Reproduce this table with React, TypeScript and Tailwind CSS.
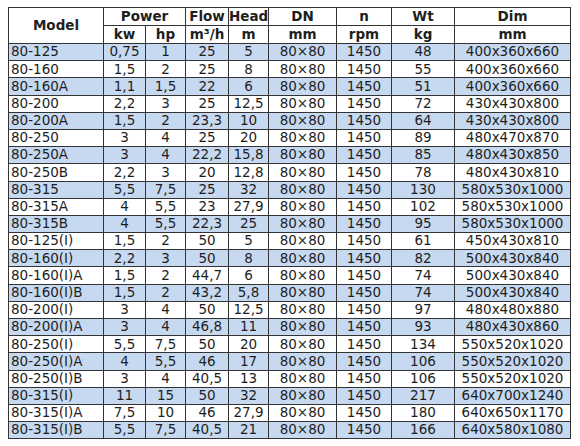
import React from "react";

const rows: string[][] = [
  ["80-125", "0,75", "1", "25", "5", "48", "400x360x660"],
  ["80-160", "1,5", "2", "25", "8", "55", "400x360x660"],
  ["80-160A", "1,1", "1,5", "22", "6", "51", "400x360x660"],
  ["80-200", "2,2", "3", "25", "12,5", "72", "430x430x800"],
  ["80-200A", "1,5", "2", "23,3", "10", "64", "430x430x800"],
  ["80-250", "3", "4", "25", "20", "89", "480x470x870"],
  ["80-250A", "3", "4", "22,2", "15,8", "85", "480x430x850"],
  ["80-250B", "2,2", "3", "20", "12,8", "78", "480x430x810"],
  ["80-315", "5,5", "7,5", "25", "32", "130", "580x530x1000"],
  ["80-315A", "4", "5,5", "23", "27,9", "102", "580x530x1000"],
  ["80-315B", "4", "5,5", "22,3", "25", "95", "580x530x1000"],
  ["80-125(I)", "1,5", "2", "50", "5", "61", "450x430x810"],
  ["80-160(I)", "2,2", "3", "50", "8", "82", "500x430x840"],
  ["80-160(I)A", "1,5", "2", "44,7", "6", "74", "500x430x840"],
  ["80-160(I)B", "1,5", "2", "43,2", "5,8", "74", "500x430x840"],
  ["80-200(I)", "3", "4", "50", "12,5", "97", "480x480x880"],
  ["80-200(I)A", "3", "4", "46,8", "11", "93", "480x430x860"],
  ["80-250(I)", "5,5", "7,5", "50", "20", "134", "550x520x1020"],
  ["80-250(I)A", "4", "5,5", "46", "17", "106", "550x520x1020"],
  ["80-250(I)B", "3", "4", "40,5", "13", "106", "550x520x1020"],
  ["80-315(I)", "11", "15", "50", "32", "217", "640x700x1240"],
  ["80-315(I)A", "7,5", "10", "46", "27,9", "180", "640x650x1170"],
  ["80-315(I)B", "5,5", "7,5", "40,5", "21", "166", "640x580x1080"],
];

const widths = [95, 42, 40, 43, 40, 68, 55, 63, 116];

export default function App() {
  const cell = "border border-[#333] p-0 leading-none";
  return (
    <div
      className="w-[580px] h-[446px] bg-white pl-[8px] pt-[7px] text-[#1e1e1e] text-[13.5px]"
      style={{ fontFamily: '"DejaVu Sans", Verdana, sans-serif' }}
    >
      <table className="border-collapse table-fixed w-[562px]">
        <colgroup>
          {widths.map((w, i) => (
            <col key={i} style={{ width: w }} />
          ))}
        </colgroup>
        <thead className="font-bold text-center">
          <tr className="h-[18px]">
            <th rowSpan={2} className={cell}>Model</th>
            <th colSpan={2} className={cell}>Power</th>
            <th className={cell}>Flow</th>
            <th className={cell}>Head</th>
            <th className={cell}>DN</th>
            <th className={cell}>n</th>
            <th className={cell}>Wt</th>
            <th className={cell}>Dim</th>
          </tr>
          <tr className="h-[18px]">
            <th className={cell}>kw</th>
            <th className={cell}>hp</th>
            <th className={cell}>m³/h</th>
            <th className={cell}>m</th>
            <th className={cell}>mm</th>
            <th className={cell}>rpm</th>
            <th className={cell}>kg</th>
            <th className={cell}>mm</th>
          </tr>
        </thead>
        <tbody>
          {rows.map((r, i) => (
            <tr
              key={i}
              className={`h-[17.2px] ${i % 2 === 0 ? "bg-[#c6d9f0]" : "bg-white"}`}
            >
              <td className={`${cell} text-left pl-[2px]`}>{r[0]}</td>
              <td className={`${cell} text-center`}>{r[1]}</td>
              <td className={`${cell} text-center`}>{r[2]}</td>
              <td className={`${cell} text-center`}>{r[3]}</td>
              <td className={`${cell} text-center`}>{r[4]}</td>
              <td className={`${cell} text-center`}>80×80</td>
              <td className={`${cell} text-center`}>1450</td>
              <td className={`${cell} text-center`}>{r[5]}</td>
              <td className={`${cell} text-center`}>{r[6]}</td>
            </tr>
          ))}
        </tbody>
      </table>
    </div>
  );
}
